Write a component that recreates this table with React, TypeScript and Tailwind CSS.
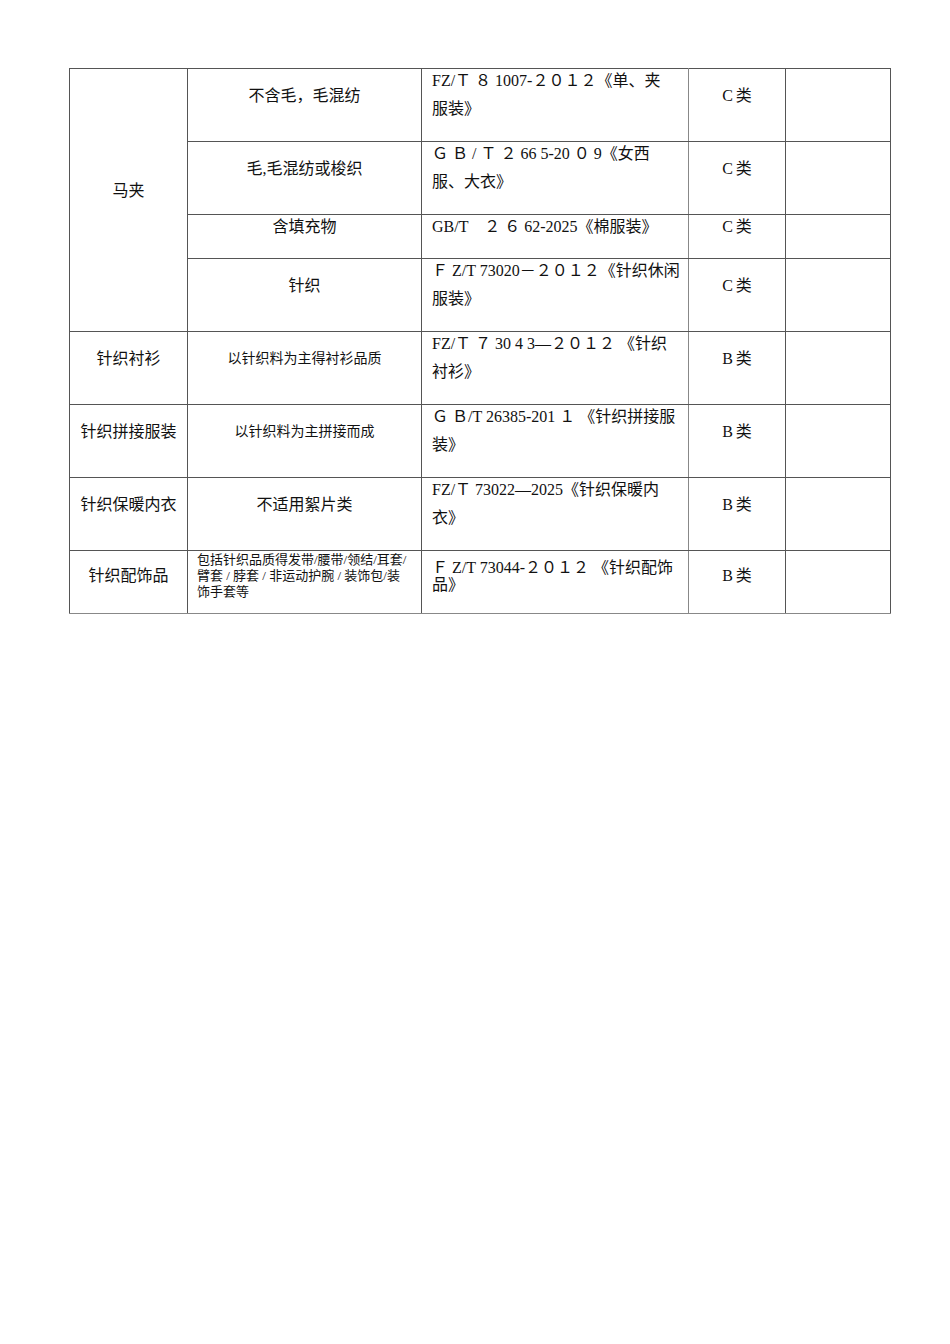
const font = { fontFamily: '"Liberation Serif", "Noto Sans CJK SC", serif' };

const rows: { label?: string; span?: number; h: string; sub: string; subCls?: string; std: string[]; cls: string }[] = [
  { label: '马夹', span: 4, h: 'h-[73px]', sub: '不含毛，毛混纺', std: ['FZ/Ｔ ８ 1007-２０１２《单、夹', '服装》'], cls: 'C' },
  { h: 'h-[73px]', sub: '毛,毛混纺或梭织', std: ['Ｇ Ｂ / Ｔ ２ 66 5-20 ０ 9《女西', '服、大衣》'], cls: 'C' },
  { h: 'h-[44px]', sub: '含填充物', std: ['GB/T　２ ６ 62-2025《棉服装》'], cls: 'C' },
  { h: 'h-[73px]', sub: '针织', std: ['Ｆ Z/T 73020－２０１２《针织休闲', '服装》'], cls: 'C' },
  { label: '针织衬衫', h: 'h-[73px]', sub: '以针织料为主得衬衫品质', subCls: 'text-[14px]', std: ['FZ/Ｔ ７ 30 4 3—２０１２ 《针织', '衬衫》'], cls: 'B' },
  { label: '针织拼接服装', h: 'h-[73px]', sub: '以针织料为主拼接而成', subCls: 'text-[14px]', std: ['Ｇ Ｂ/T 26385-201 １ 《针织拼接服', '装》'], cls: 'B' },
  { label: '针织保暖内衣', h: 'h-[73px]', sub: '不适用絮片类', std: ['FZ/Ｔ 73022—2025《针织保暖内', '衣》'], cls: 'B' },
];

export default function App() {
  const bd = 'border border-[#555]';
  const mid = 'align-middle text-center pt-[2px] pb-[21px] leading-[20px]';
  return (
    <div className="min-h-[1344px] w-[950px] bg-white pt-[68px] pl-[69px] text-[16px] text-[#111]" style={font}>
      <table className="table-fixed border-collapse w-[821px]">
        <colgroup>
          <col className="w-[118px]" />
          <col className="w-[234px]" />
          <col className="w-[267px]" />
          <col className="w-[97px]" />
          <col className="w-[105px]" />
        </colgroup>
        <tbody>
          {rows.map((r, i) => (
            <tr key={i} className={r.h}>
              {r.label && (
                <td rowSpan={r.span} className={`${bd} ${mid}`}>{r.label}</td>
              )}
              <td className={`${bd} ${mid} ${r.subCls ?? ''}`}>{r.sub}</td>
              <td className={`${bd} border-r-[#888] align-top pl-[10px] pr-1 leading-[28px]`}>
                <div className="-mt-[2px]">
                  {r.std.map((l, j) => (
                    <div key={j} className="whitespace-pre">{l}</div>
                  ))}
                </div>
              </td>
              <td className={`${bd} ${mid}`}>
                <span className="mr-[3px]">{r.cls}</span>类
              </td>
              <td className={bd}></td>
            </tr>
          ))}
          <tr className="h-[63px]">
            <td className={`${bd} border-b-[#888] align-middle text-center pt-0 pb-[13px] leading-[20px]`}>针织配饰品</td>
            <td className={`${bd} border-b-[#888] align-middle pl-[9px] pr-1 pt-0 pb-[13px] text-[13px] leading-[16px]`}>
              <div className="whitespace-pre">包括针织品质得发带/腰带/领结/耳套/</div>
              <div className="whitespace-pre">臂套 / 脖套 / 非运动护腕 / 装饰包/装</div>
              <div className="whitespace-pre">饰手套等</div>
            </td>
            <td className={`${bd} border-b-[#888] border-r-[#888] align-middle pl-[10px] pr-1 pt-0 pb-[13px] leading-[17px]`}>
              <div className="whitespace-pre">Ｆ Z/T 73044-２０１２ 《针织配饰</div>
              <div className="whitespace-pre">品》</div>
            </td>
            <td className={`${bd} border-b-[#888] align-middle text-center pt-0 pb-[13px] leading-[20px]`}>
              <span className="mr-[3px]">B</span>类
            </td>
            <td className={`${bd} border-b-[#888]`}></td>
          </tr>
        </tbody>
      </table>
    </div>
  );
}
